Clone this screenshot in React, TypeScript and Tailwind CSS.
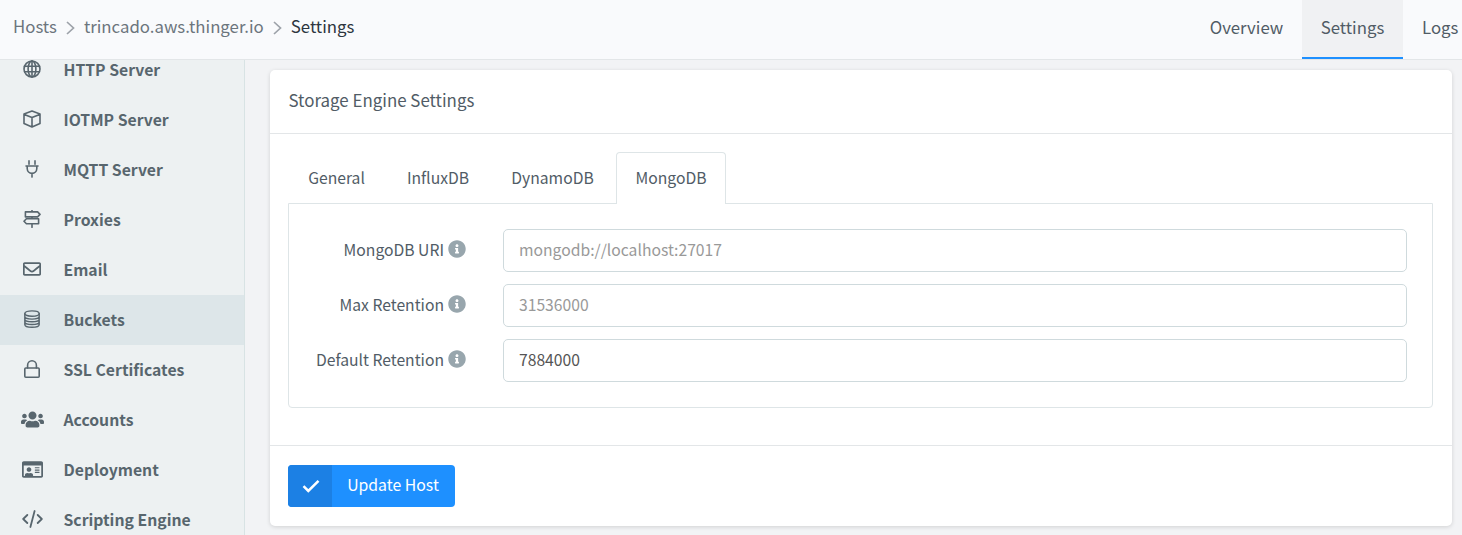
import type { ReactNode } from "react";
import { FaUsers, FaRegIdCard, FaRegEnvelope, FaInfoCircle } from "react-icons/fa";

function Stroke({ children, width = 18, box = "0 0 18 18" }: { children: ReactNode; width?: number; box?: string }) {
  return (
    <svg width={width} height={18} viewBox={box} fill="none" stroke="currentColor" strokeWidth={1.6} strokeLinecap="round" strokeLinejoin="round">
      {children}
    </svg>
  );
}

const icons = {
  globe: (
    <Stroke>
      <circle cx="9" cy="9" r="8" />
      <ellipse cx="9" cy="9" rx="3.9" ry="8" />
      <path d="M1.6 6.3h14.8M1.6 11.7h14.8M9 1v16" />
    </Stroke>
  ),
  box: (
    <Stroke>
      <path d="M9 1 17 4v9.6L9 17 1 13.6V4zM1.3 4.4 9 7.6l7.7-3.2M9 7.6V17" />
    </Stroke>
  ),
  plug: (
    <Stroke>
      <path d="M6 .9v3.4M12 .9v3.4M3 6h12M4.2 6v2.6a4.8 4.8 0 0 0 9.6 0V6M9 13.6v3.5" />
    </Stroke>
  ),
  signs: (
    <Stroke>
      <path d="M9 .5v1.3M9 7v1.7M9 14v3.3M2.4 1.9h12.2L17 4.4 14.6 6.9H2.4zM15.6 8.8H3.4L1 11.3l2.4 2.5h12.2z" />
    </Stroke>
  ),
  envelope: <FaRegEnvelope size={18} />,
  database: (
    <Stroke>
      <g strokeWidth="1.4">
        <ellipse cx="9" cy="3.6" rx="7.2" ry="2.7" />
        <path d="M1.8 3.6v10.8c0 1.6 3.2 2.8 7.2 2.8s7.2-1.2 7.2-2.8V3.6M1.8 6.3c0 1.6 3.2 2.8 7.2 2.8s7.2-1.2 7.2-2.8M1.8 9c0 1.6 3.2 2.8 7.2 2.8s7.2-1.2 7.2-2.8M1.8 11.7c0 1.6 3.2 2.8 7.2 2.8s7.2-1.2 7.2-2.8" />
      </g>
    </Stroke>
  ),
  lock: (
    <Stroke>
      <rect x="1.8" y="8" width="14.4" height="9.2" rx="1" />
      <path d="M4.6 8V5.2a4.4 4.4 0 0 1 8.8 0V8" />
    </Stroke>
  ),
  users: <FaUsers size={23} />,
  card: <FaRegIdCard size={21} />,
  code: (
    <Stroke width={21} box="0 0 21 18">
      <path d="M12.6 1 8.4 17M5.3 5 1.2 9l4.1 4M15.7 5l4.1 4-4.1 4" strokeWidth={1.8} />
    </Stroke>
  ),
};

const menu: { label: string; icon: keyof typeof icons; active?: boolean }[] = [
  { label: "HTTP Server", icon: "globe" },
  { label: "IOTMP Server", icon: "box" },
  { label: "MQTT Server", icon: "plug" },
  { label: "Proxies", icon: "signs" },
  { label: "Email", icon: "envelope" },
  { label: "Buckets", icon: "database", active: true },
  { label: "SSL Certificates", icon: "lock" },
  { label: "Accounts", icon: "users" },
  { label: "Deployment", icon: "card" },
  { label: "Scripting Engine", icon: "code" },
];

function Chevron() {
  return (
    <svg width="9" height="14" viewBox="0 0 9 14" fill="none" stroke="#9da2a9" strokeWidth="1.7">
      <path d="M1 1l6.5 6L1 13" />
    </svg>
  );
}

function Header() {
  return (
    <header className="flex h-[60px] shrink-0 justify-between border-b border-[#e3e6e8] bg-[#f9fafc] text-[16.8px]">
      <nav className="flex h-[52px] items-center pl-[13px] text-[#6c757d]">
        <span>Hosts</span>
        <span className="mt-[3px] mr-[9px] ml-[9px]"><Chevron /></span>
        <span>trincado.aws.thinger.io</span>
        <span className="mt-[3px] mr-[9px] ml-[9px]"><Chevron /></span>
        <span className="text-[#2d3540]">Settings</span>
      </nav>
      <nav className="flex h-[59px]">
        <a className="flex w-[111px] items-center justify-center pb-[5px]">Overview</a>
        <a className="flex w-[101px] items-center justify-center border-b-2 border-[#1e90ff] bg-[#f0f1f3] pb-[3px]">Settings</a>
        <a className="flex w-[59px] items-center pb-[5px] pl-[19px]">Logs</a>
      </nav>
    </header>
  );
}

function Sidebar() {
  return (
    <aside className="w-[245px] shrink-0 overflow-hidden border-r border-[#d8e3e4] bg-[#edf1f2]">
      <ul className="-mt-[15px]">
        {menu.map((item) => (
          <li
            key={item.label}
            className={`flex h-[50px] items-center text-[15.75px] leading-[18px] font-bold text-[#58666e] ${item.active ? "bg-[#dde6e9]" : ""}`}
          >
            <span className="flex w-[63.5px] shrink-0 justify-center pb-[2px] pl-[1px]">{icons[item.icon]}</span>
            <span>{item.label}</span>
          </li>
        ))}
      </ul>
    </aside>
  );
}

const tabs = [
  { label: "General", style: "w-[99px] pr-[2px]" },
  { label: "InfluxDB", style: "w-[104px] pr-[2px]" },
  { label: "DynamoDB", style: "w-[125px] pr-[2px]" },
  { label: "MongoDB", style: "w-[110px] rounded-t border border-b-0 border-[#dee5e7] bg-white pb-px" },
];

const fields = [
  { label: "MongoDB URI", placeholder: "mongodb://localhost:27017" },
  { label: "Max Retention", placeholder: "31536000" },
  { label: "Default Retention", value: "7884000" },
];

function Panel() {
  return (
    <section className="h-[456px] w-[1182px] rounded-[5px] bg-white shadow-[0_1px_4px_rgba(0,0,0,0.14)]">
      <h2 className="flex h-16 items-center border-b border-[#e3e6e8] pb-[3px] pl-[18.5px] text-[16.9px]">Storage Engine Settings</h2>
      <div className="h-[312px] border-b border-[#e3e6e8] pt-[18px] pr-[19px] pl-[18px]">
        <div className="relative z-10 -mb-px flex h-[52px]">
          {tabs.map((tab) => (
            <div key={tab.label} className={`flex items-center justify-center text-[15.7px] ${tab.style}`}>{tab.label}</div>
          ))}
        </div>
        <div className="flex h-[205px] flex-col gap-3 rounded-b-[4px] border border-[#dee5e7] pt-[25px] pr-[25px]">
          {fields.map((f) => (
            <label key={f.label} className="flex h-[43px] items-center text-[15.7px]">
              <span className="flex w-[177px] items-center justify-end gap-1 pb-px">
                {f.label}
                <FaInfoCircle size={18} color="#98a6ad" className="mb-[2px]" />
              </span>
              <input
                className="ml-[37px] h-[43px] min-w-0 flex-1 rounded-[5px] border border-[#cfdadd] bg-white px-[15px] pb-[3px] text-[#555] outline-none placeholder:text-[#999]"
                placeholder={f.placeholder}
                defaultValue={f.value}
              />
            </label>
          ))}
        </div>
      </div>
      <div className="px-[18px] pt-[19px]">
        <button className="flex h-[42px] w-[167px] overflow-hidden rounded-[4px] bg-[#1e90ff] text-[15.8px] text-white">
          <span className="flex h-full w-[44px] items-center justify-center bg-[#1c80e4] pl-[2px]">
            <svg width="18" height="14" viewBox="0 0 18 14" fill="none" stroke="white" strokeWidth="2.5">
              <path d="M1.5 7.2 6.3 12 16.5 1.8" />
            </svg>
          </span>
          <span className="flex h-full flex-1 items-center justify-center pr-[1px] pb-[2px]">Update Host</span>
        </button>
      </div>
    </section>
  );
}

export default function App() {
  return (
    <div className="flex h-[535px] w-[1462px] flex-col overflow-hidden bg-[#f2f3f5] font-['Noto_Sans_CJK_SC','Noto_Sans',sans-serif] text-[16px] leading-[24px] whitespace-nowrap text-[#515c66]">
      <Header />
      <div className="flex min-h-0 flex-1">
        <Sidebar />
        <main className="pt-[10px] pl-[25px]">
          <Panel />
        </main>
      </div>
    </div>
  );
}
